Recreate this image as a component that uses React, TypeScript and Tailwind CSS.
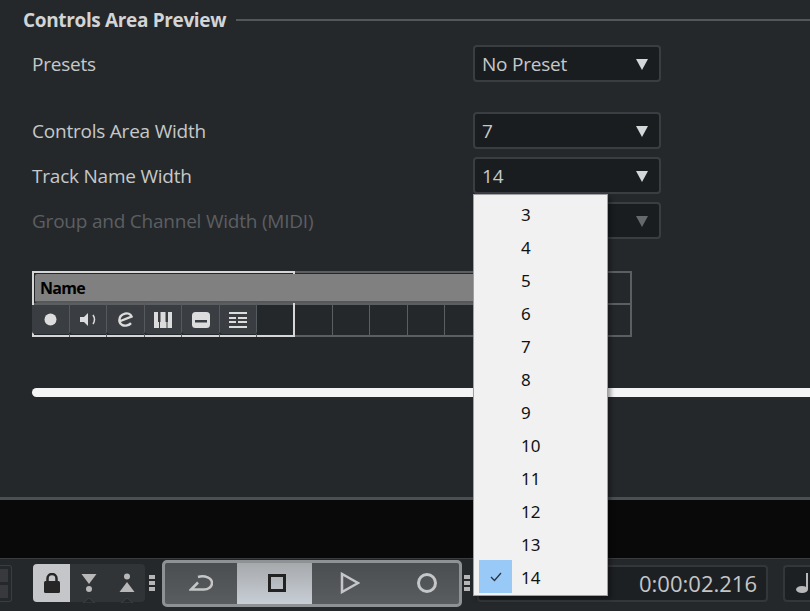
import React from "react";

const menuItems = [3, 4, 5, 6, 7, 8, 9, 10, 11, 12, 13, 14];
const gridCols = Array.from({ length: 8 });

const Arrow = ({ dim }: { dim?: boolean }) => (
  <svg width="14" height="12" viewBox="0 0 14 12" className="shrink-0">
    <path d="M1 1h12L7 12z" fill={dim ? "#66696c" : "#d4d6d8"} />
  </svg>
);

const SelectBox = ({ value, dim }: { value: string; dim?: boolean }) => (
  <div className="w-[188px] h-[37px] flex items-center justify-between pl-[7px] pr-[10px] rounded-[4px] border-2 border-[#3a3e42] bg-[#1a1d20] text-[19px] tracking-[-0.22px] text-[#c6c8ca]">
    <span className="pt-[2px]">{value}</span>
    <Arrow dim={dim} />
  </div>
);

const Row = ({ label, value, dim, className }: { label: string; value: string; dim?: boolean; className?: string }) => (
  <div className={`flex items-center h-[37px] ${className ?? ""}`}>
    <div className={`w-[441px] pt-[2px] text-[19px] tracking-[-0.22px] ${dim ? "text-[#5c5f62]" : "text-[#c6c8ca]"}`}>{label}</div>
    <SelectBox value={value} dim={dim} />
  </div>
);

const TrackIcon = ({ children }: { children: React.ReactNode }) => (
  <div className="relative w-[37.5px] h-[29px] shrink-0 flex items-center justify-center bg-[#3a3e42] border-r border-[#555a5e] rounded-b-[3px] text-[#dcdcdc]">
    {children}
    <div className="absolute -right-[1px] -top-[3px] w-[1px] h-[3px] bg-[#555a5e]" />
    <div className="absolute -right-[1px] -bottom-[3px] w-[1px] h-[3px] bg-[#555a5e]" />
  </div>
);

const Grip = () => (
  <div className="w-[6px] flex flex-col gap-[2px] shrink-0">
    <div className="h-[4px] bg-[#b5b5b5]" />
    <div className="h-[4px] bg-[#b5b5b5]" />
    <div className="h-[4px] bg-[#b5b5b5]" />
  </div>
);

const Notch = () => (
  <svg width="12" height="5" viewBox="0 0 12 5" className="absolute left-1/2 -translate-x-1/2 -bottom-[1px]">
    <path d="M0 5 6 0l6 5z" fill="#25282b" stroke="#3d4043" strokeWidth="1" />
  </svg>
);

export default function App() {
  return (
    <div className="relative w-[810px] h-[611px] overflow-hidden bg-[#25282b] font-['Open_Sans','Noto_Sans',sans-serif]">
      <div className="h-[497px] pt-[8px] pl-[23px]">
        <div className="flex items-center h-[24px]">
          <span className="text-[19px] font-bold text-[#d2d4d6] leading-none tracking-[-0.35px]">Controls Area Preview</span>
          <div className="flex-1 h-[2px] bg-[#54575a] ml-[10px]" />
        </div>
        <div className="pl-[9px]">
          <Row label="Presets" value="No Preset" className="mt-[13px]" />
          <Row label="Controls Area Width" value="7" className="mt-[30px]" />
          <Row label="Track Name Width" value="14" className="mt-[8px]" />
          <Row label="Group and Channel Width (MIDI)" value="" dim className="mt-[8px]" />

          <div className="relative mt-[32px] w-[600px] h-[66px] border-2 border-[#5c5f62] flex flex-col">
            <div className="h-[32px] border-b-2 border-[#5c5f62]" />
            <div className="flex flex-1 pl-[261px]">
              {gridCols.map((_, i) => (
                <div key={i} className="w-[37.5px] shrink-0 border-r border-[#5c5f62]" />
              ))}
            </div>
            {/* selected track name area sits over the grid */}
            <div className="absolute -left-[2px] -top-[2px] w-[263px] h-[66px] border-2 border-[#d6d6d6] flex flex-col">
              <div className="h-[29px] mt-[1px] ml-[1px] w-[500px] shrink-0 bg-[#808080] rounded-[2px] border-b-2 border-[#55585a] flex items-center pl-[5px] text-[16px] tracking-[-0.7px] font-bold text-black">
                Name
              </div>
              <div className="flex mt-[2px] -ml-[2px]">
                <TrackIcon>
                  <svg width="13" height="13" viewBox="0 0 13 13" className="ml-[1px]"><circle cx="6.500" cy="6.500" r="6" fill="currentColor" /></svg>
                </TrackIcon>
                <TrackIcon>
                  <svg width="16" height="13" viewBox="0 0 16 13">
                    <path d="M0 4h4l4-4v13L4 9H0z" fill="currentColor" />
                    <path d="M13 2c2 3 2 6 0 9" stroke="currentColor" strokeWidth="1.500" fill="none" />
                  </svg>
                </TrackIcon>
                <TrackIcon>
                  <svg width="16" height="15" viewBox="0 0 16 15" className="ml-[1px]">
                    <path d="M2.500 9 13.500 4.500C12.500 1.800 9.500 1 7 1.700 3 2.800 1 6 1.500 9.500c.5 3.500 4.500 4.700 7.500 3.900 1.600-.4 3-1.200 4-2.300" stroke="currentColor" strokeWidth="2.400" fill="none" />
                  </svg>
                </TrackIcon>
                <TrackIcon>
                  <svg width="18" height="16" viewBox="0 0 18 16">
                    <rect width="18" height="16" fill="currentColor" />
                    <rect x="4" width="2.500" height="10" fill="#3a3e42" />
                    <rect x="11.500" width="2.500" height="10" fill="#3a3e42" />
                    <rect x="5" y="10" width="1" height="6" fill="#3a3e42" />
                    <rect x="12.500" y="10" width="1" height="6" fill="#3a3e42" />
                  </svg>
                </TrackIcon>
                <TrackIcon>
                  <svg width="18" height="16" viewBox="0 0 18 16" className="ml-[1px]">
                    <rect width="18" height="16" rx="3.500" fill="currentColor" />
                    <rect x="3" y="8" width="12" height="2.500" fill="#3a3e42" />
                  </svg>
                </TrackIcon>
                <TrackIcon>
                  <svg width="18" height="16" viewBox="0 0 18 16" fill="currentColor">
                    <rect width="18" height="2" />
                    <rect y="5" width="7" height="2" /><rect x="9" y="5" width="9" height="2" />
                    <rect y="9" width="7" height="2" /><rect x="9" y="9" width="9" height="2" />
                    <rect y="14" width="18" height="2" />
                  </svg>
                </TrackIcon>
              </div>
            </div>
          </div>
        </div>
        <div className="mt-[51px] ml-[9px] h-[9px] bg-[#f4f4f4] rounded-l-full" />
      </div>

      <div className="h-[3px] bg-[#4c4f52]" />
      <div className="h-[59px] bg-[#090909] border-b border-[#3a3d40]" />

      <div className="flex items-center h-[52px] pb-[4px]">
        <div className="w-[12px] h-[37px] shrink-0 flex flex-col justify-center gap-[3px] border border-l-0 border-[#3a3e42] rounded-r-[3px]">
          <div className="w-[8px] h-[13px] bg-[#37393c]" />
          <div className="w-[8px] h-[13px] bg-[#37393c]" />
        </div>

        <div className="ml-[21px] w-[112px] h-[38px] shrink-0 flex rounded-[4px] bg-[#313437]">
          <div className="w-[37px] flex items-center justify-center bg-[#c4c6c9] rounded-l-[4px]">
            <svg width="16" height="20" viewBox="0 0 16 20">
              <path d="M3.500 9V5.500a4.500 4.500 0 0 1 9 0V9" stroke="#262626" strokeWidth="2.500" fill="none" />
              <rect y="8" width="16" height="12" rx="1.500" fill="#262626" />
            </svg>
          </div>
          <div className="relative w-[38px] flex items-center justify-center">
            <svg width="16" height="20" viewBox="0 0 16 20" fill="#b8b8b8">
              <path d="M.5 1h15L8 11z" /><circle cx="8" cy="16" r="3" />
            </svg>
            <Notch />
          </div>
          <div className="relative w-[37px] flex items-center justify-center">
            <svg width="16" height="20" viewBox="0 0 16 20" fill="#b8b8b8">
              <circle cx="8" cy="3.500" r="3" /><path d="M.5 19h15L8 9z" />
            </svg>
            <Notch />
          </div>
        </div>
        <div className="ml-[4px]"><Grip /></div>

        <div className="ml-[7px] w-[300px] h-[47px] shrink-0 flex rounded-[5px] border-[3px] border-[#8f9294] bg-gradient-to-b from-[#4b4e50] to-[#5a5d5f] overflow-hidden">
          <div className="w-[72px] flex items-center justify-center">
            <svg width="24" height="16" viewBox="0 0 24 16" fill="none" stroke="#c4c6c8" strokeWidth="2.500">
              <path d="M9 2C16 0 23 3 23 8c0 4-4 6.500-8 6.500H2L9 7.500" />
            </svg>
          </div>
          <div className="w-[75px] flex items-center justify-center bg-gradient-to-b from-[#a6a9ac] to-[#c8ced6]">
            <div className="ml-[4px] w-[18px] h-[18px] border-[3px] border-[#222]" />
          </div>
          <div className="w-[76px] flex items-center justify-center">
            <svg width="20" height="22" viewBox="0 0 20 22" fill="none" stroke="#c4c6c8" strokeWidth="2.500">
              <path d="M2 2v18l16-9z" />
            </svg>
          </div>
          <div className="flex-1 flex items-center justify-center">
            <div className="ml-[6px] w-[20px] h-[20px] rounded-full border-[3px] border-[#c4c6c8]" />
          </div>
        </div>
        <div className="ml-[2px]"><Grip /></div>

        <div className="ml-[7px] w-[291px] h-[37px] shrink-0 flex items-center justify-end pr-[9px] rounded-[4px] border-2 border-[#34373a] bg-[#1d2023] text-[22px] text-[#c4c6c8]">
          0:00:02.216
        </div>

        <div className="relative ml-[15px] w-[40px] h-[37px] shrink-0 flex items-center pl-[11px] rounded-l-[4px] border-2 border-r-0 border-[#34373a] bg-[#1d2023]">
          <svg width="14" height="20" viewBox="0 0 14 20" fill="#b8b8b8">
            <ellipse cx="6" cy="16.500" rx="6" ry="3.500" />
            <rect x="10" y="0" width="2" height="16" />
          </svg>
        </div>
      </div>

      {/* open dropdown list */}
      <div className="absolute left-[473px] top-[194px] w-[135px] h-[402px] pt-[2px] bg-[#f1f1f1] border border-[#a0a0a0] shadow-[3px_3px_4px_rgba(0,0,0,0.35)] font-['Noto_Sans','Open_Sans',sans-serif]">
        {menuItems.map((n) => (
          <div key={n} className="flex h-[33px] items-center pl-[5px] text-[17px] text-[#111]">
            <div className={`w-[33px] h-[33px] flex items-center justify-center ${n === 14 ? "bg-[#99c9f7]" : ""}`}>
              {n === 14 && (
                <svg width="12" height="10" viewBox="0 0 12 10" fill="none" stroke="#2a3440" strokeWidth="1.300">
                  <path d="M1 5l3.500 3.500L11 1" />
                </svg>
              )}
            </div>
            <span className="ml-[9px] pt-[2px]">{n}</span>
          </div>
        ))}
      </div>
    </div>
  );
}
